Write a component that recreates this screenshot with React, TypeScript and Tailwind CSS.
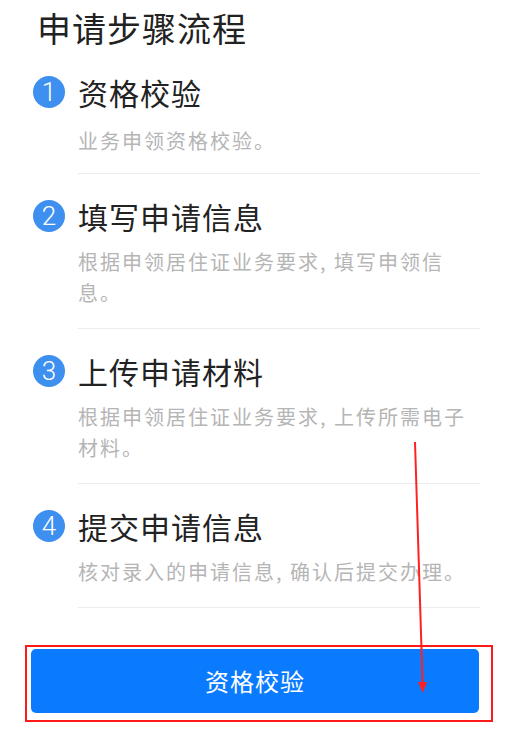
const steps = [
  { n: 1, title: "资格校验", desc: "业务申领资格校验。" },
  { n: 2, title: "填写申请信息", desc: "根据申领居住证业务要求, 填写申领信息。" },
  { n: 3, title: "上传申请材料", desc: "根据申领居住证业务要求, 上传所需电子材料。" },
  { n: 4, title: "提交申请信息", desc: "核对录入的申请信息, 确认后提交办理。" },
];

function StepBadge({ n }: { n: number }) {
  return (
    <div className="flex h-8 w-8 shrink-0 items-center justify-center rounded-full bg-[#3d8ff0] text-[26px] font-light leading-none text-white [font-family:Roboto,'Noto_Sans',sans-serif]">
      {n}
    </div>
  );
}

export default function App() {
  return (
    <div className="relative min-h-[732px] w-[512px] bg-white [font-family:'Noto_Sans_CJK_SC','Noto_Sans',sans-serif]">
      <h1 className="pl-[37px] pt-[8px] text-[34px] font-normal leading-[40px] tracking-[1px] text-[#222]">申请步骤流程</h1>

      <div className="mt-[2px] pl-[33px] pr-[32px]">
        {steps.map((s) => (
          <div key={s.n} className="pt-[22px]">
            <div className="flex h-[40px] items-center gap-[13px]">
              <StepBadge n={s.n} />
              <span className="text-[30px] leading-[40px] tracking-[1px] text-[#222]">{s.title}</span>
            </div>
            <div className={`ml-[45px] border-b border-[#ececec] ${s.n === 1 ? "pb-[17px] pt-[13px]" : "pb-[20px] pt-[10px]"}`}>
              <p className="text-[20px] leading-[31px] tracking-[2px] text-[#b5b5b5]">{s.desc}</p>
            </div>
          </div>
        ))}
      </div>

      <div className="ml-[25px] mt-[37px] h-[77px] w-[468px] border-2 border-[#ff1a1a] pl-[4px] pt-[2px]">
        <button
          type="button"
          className="flex h-[64px] w-[448px] items-center justify-center rounded-[5px] bg-[#0a7bff] text-[24px] tracking-[1px] text-white"
        >
          资格校验
        </button>
      </div>

      {/* annotation arrow */}
      <svg className="pointer-events-none absolute left-0 top-0" width="512" height="732" viewBox="0 0 512 732">
        <line x1="415" y1="442" x2="422.6" y2="684" stroke="#ff2020" strokeWidth="2" />
        <polygon points="418,682 427,682 422.8,693" fill="#ff2020" />
      </svg>
    </div>
  );
}
